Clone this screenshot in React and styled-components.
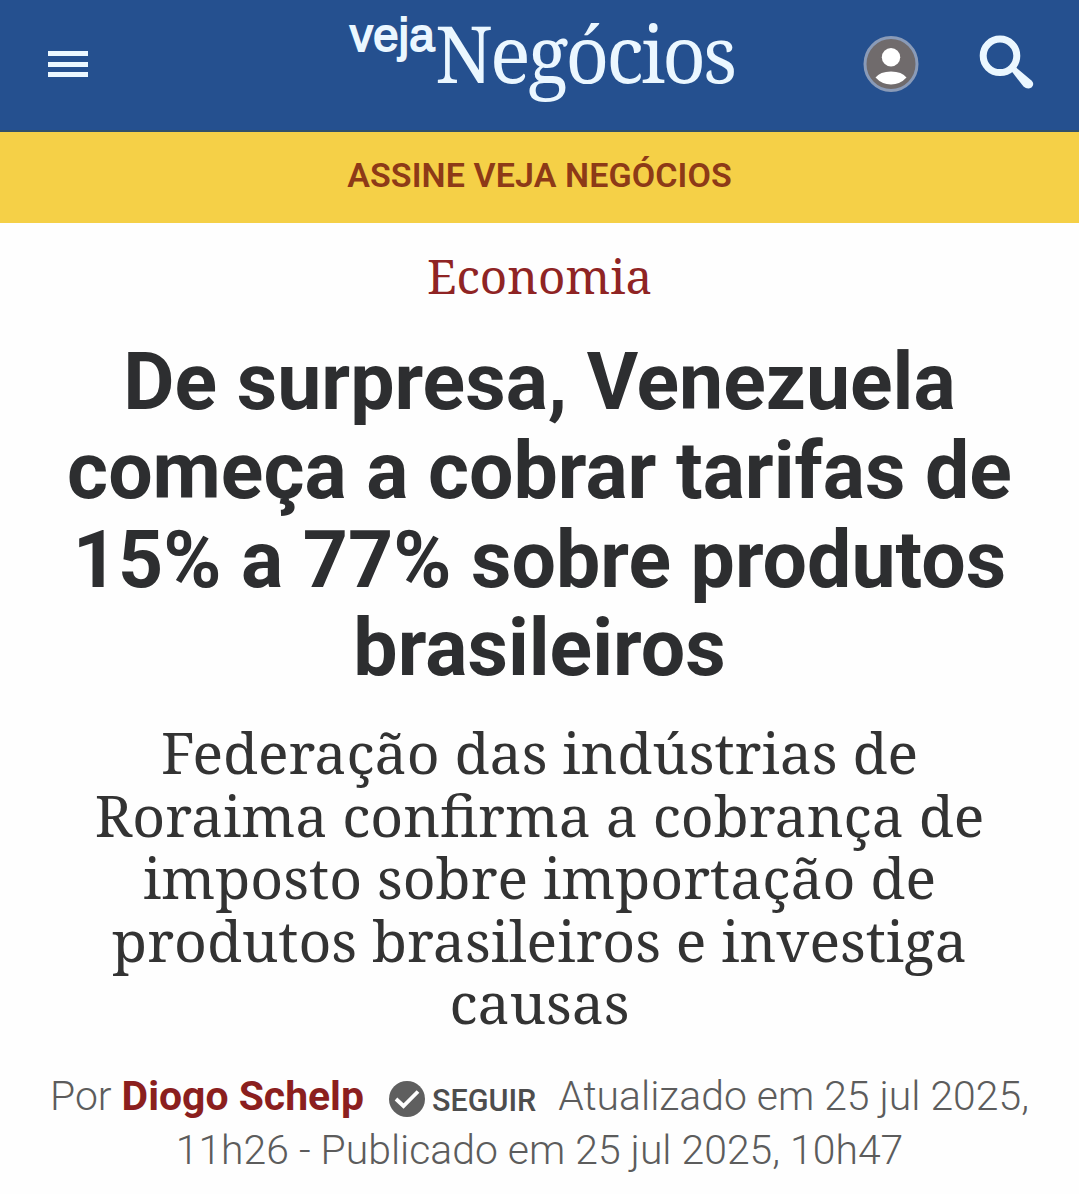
import React from "react";
import styled, { createGlobalStyle } from "styled-components";

const App = () => {
  return (
    <Page>
      <GlobalStyle />
      <Header>
        <MenuButton aria-label="Menu">
          <span />
          <span />
          <span />
        </MenuButton>
        <Logo href="#">
          <small>veja</small>
          <span>Negócios</span>
        </Logo>
        <Actions>
          <svg width="56" height="58" viewBox="0 0 56 58">
            <ellipse cx="28" cy="29" rx="26" ry="26.5" fill="#706b6c" stroke="#8a9bb8" strokeWidth="3" />
            <circle cx="28" cy="22.2" r="9.2" fill="#fff" />
            <path d="M12.5 42.5Q17 36.5 28 36.5T43.5 42.5Q37 49.5 28 49.5T12.5 42.5Z" fill="#fff" />
          </svg>
          <svg width="56" height="56" viewBox="0 0 56 56">
            <circle cx="21" cy="20.8" r="16.8" fill="none" stroke="#ebf7ff" strokeWidth="7" />
            <path d="M32 35.5L36.5 32L52.5 45.5Q56 49 52.5 52.5Q48.5 55 44.5 51.5Z" fill="#ebf7ff" />
          </svg>
        </Actions>
      </Header>
      <SubscribeBar href="#">ASSINE VEJA NEGÓCIOS</SubscribeBar>
      <Article>
        <Category href="#">Economia</Category>
        <Title>
          De surpresa, Venezuela
          <br />
          começa a cobrar tarifas de
          <br />
          15% a 77% sobre produtos
          <br />
          brasileiros
        </Title>
        <Summary>
          Federação das indústrias de
          <br />
          Roraima confirma a cobrança de
          <br />
          imposto sobre importação de
          <br />
          produtos brasileiros e investiga
          <br />
          causas
        </Summary>
        <Byline>
          <div>
            <span>
              Por <Author href="#">Diogo Schelp</Author>
            </span>
            <FollowButton>
              <svg width="36" height="36" viewBox="0 0 36 36">
                <circle cx="18" cy="18" r="18" fill="#5f5f5f" />
                <path d="M7 18L14.5 25L29 10.5" fill="none" stroke="#fff" strokeWidth="3.8" />
              </svg>
              <span>SEGUIR</span>
            </FollowButton>
            <span>Atualizado em 25 jul 2025,</span>
          </div>
          <div>11h26 - Publicado em 25 jul 2025, 10h47</div>
        </Byline>
      </Article>
    </Page>
  );
};

const GlobalStyle = createGlobalStyle`
  body {
    margin: 0;
    background: #fff;
  }
  * {
    box-sizing: border-box;
  }
  a {
    text-decoration: none;
  }
`;

const Page = styled.div`
  height: 1194px;
  overflow: hidden;
  background: #fefefe;
  font-family: Roboto, "Liberation Sans", sans-serif;
`;

const Header = styled.header`
  display: flex;
  align-items: flex-start;
  height: 132px;
  background: #25508f;
  border-bottom: 2px solid #31506a;
`;

const MenuButton = styled.button`
  display: flex;
  flex-direction: column;
  gap: 5.5px;
  width: 40px;
  margin: 51px 0 0 48px;
  padding: 0;
  border: none;
  background: none;
  span {
    height: 5px;
    background: #ebf7ff;
  }
`;

const Logo = styled.a`
  display: flex;
  align-items: flex-start;
  margin-left: 262px;
  width: 387px;
  color: #ebf7ff;
  white-space: nowrap;
  small {
    width: 87px;
    margin-top: 11px;
    font: 45.5px/50px "Liberation Sans", sans-serif;
    letter-spacing: 0.4px;
    -webkit-text-stroke: 1.8px #ebf7ff;
  }
  span {
    font: 78px/106px "Noto Serif", serif;
    letter-spacing: -3px;
    transform: scaleX(0.973);
    transform-origin: left;
  }
`;

const Actions = styled.div`
  display: flex;
  align-items: flex-start;
  gap: 60px;
  margin: 35px 0 0 126px;
`;

const SubscribeBar = styled.a`
  display: flex;
  align-items: center;
  justify-content: center;
  height: 91px;
  padding-bottom: 5px;
  background: #f5d047;
  color: #8d3a17;
  font-size: 34px;
  font-weight: 600;
  letter-spacing: 0.1px;
`;

const Article = styled.main`
  display: flex;
  flex-direction: column;
  align-items: center;
  text-align: center;
  white-space: nowrap;
`;

const Category = styled.a`
  margin-top: 23px;
  color: #8f2424;
  font: 47.5px/60px "Noto Serif", "DejaVu Serif", serif;
`;

const Title = styled.h1`
  margin: 32px 0 0;
  color: #2d2e30;
  font-size: 78.8px;
  font-weight: 700;
  line-height: 88.8px;
`;

const Summary = styled.h2`
  margin: 28px 0 0;
  color: #333;
  font: 57.1px/62.5px "Noto Serif", "DejaVu Serif", serif;
`;

const Byline = styled.div`
  margin-top: 35px;
  color: #5c5c5c;
  font-size: 40.9px;
  font-weight: 300;
  line-height: 54px;
  div {
    display: flex;
    justify-content: center;
    height: 54px;
  }
`;

const Author = styled.a`
  color: #8b1f1e;
  font-weight: 700;
`;

const FollowButton = styled.button`
  display: flex;
  align-items: center;
  gap: 7px;
  height: 54px;
  margin: 3px 22px 0 25px;
  padding: 0;
  border: none;
  background: none;
  color: #4d4d4d;
  font: 500 30.5px/54px Roboto, sans-serif;
  span {
    padding-top: 4px;
  }
`;

export default App;
